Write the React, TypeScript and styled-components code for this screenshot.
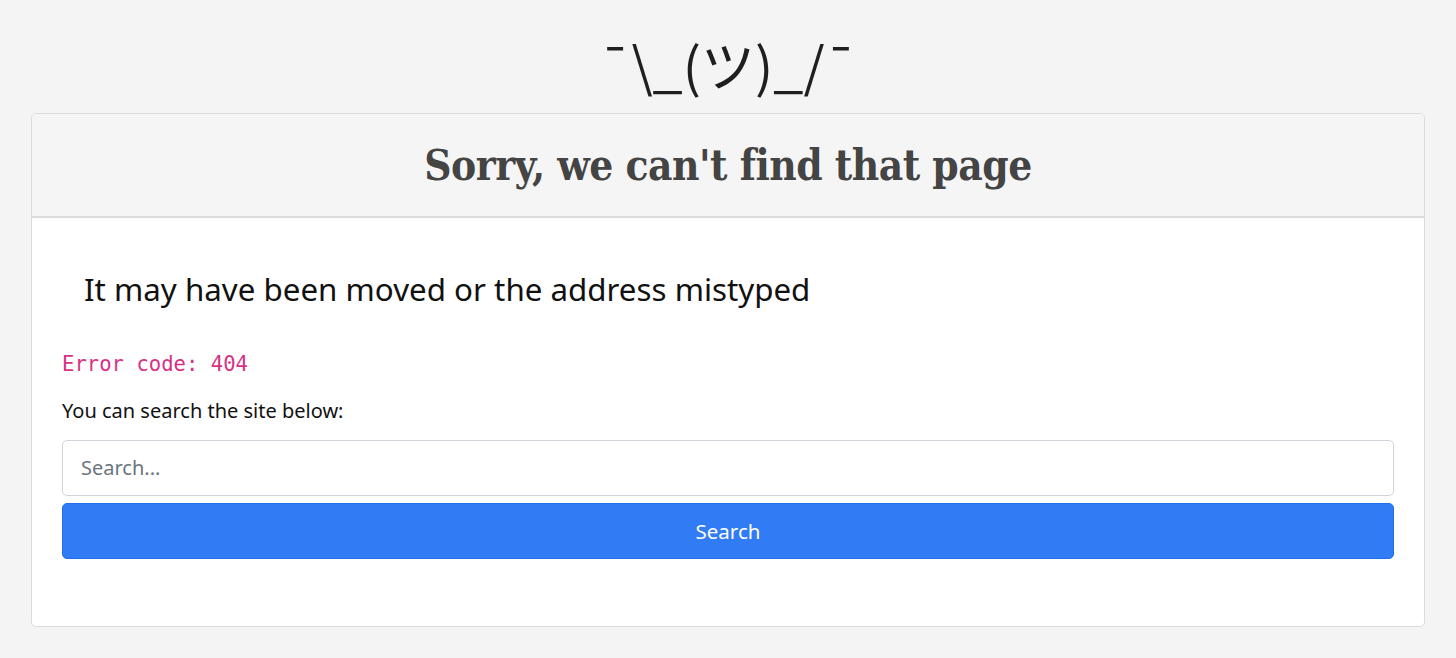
import styled, { createGlobalStyle } from 'styled-components';

const GlobalStyle = createGlobalStyle`
  html, body {
    margin: 0;
    padding: 0;
    background: #f4f4f4;
  }
  * {
    box-sizing: border-box;
  }
`;

const Page = styled.main`
  min-height: 100vh;
  padding: 0 31px 30px;
  font-family: "Noto Sans", "Open Sans", sans-serif;
  color: #212529;
`;

const Shrug = styled.div`
  height: 113px;
  display: flex;
  align-items: center;
  justify-content: center;
  font-family: "Noto Sans CJK JP", "DejaVu Sans", sans-serif;
  font-size: 54px;
  color: #1f1f1f;
  padding-top: 14px;
`;

const Card = styled.section`
  background: #fff;
  border: 1px solid #dcdcdc;
  border-radius: 5px;
  overflow: hidden;
`;

const CardHeader = styled.header`
  height: 104px;
  display: flex;
  align-items: center;
  justify-content: center;
  background: #f5f5f5;
  border-bottom: 2px solid #dcdcdc;
`;

const Title = styled.h1`
  margin: 0;
  font-family: "DejaVu Serif Condensed", "DejaVu Serif", serif;
  font-weight: 700;
  font-size: 42px;
  color: #444;
  letter-spacing: -0.5px;
`;

const CardBody = styled.div`
  padding: 53px 30px 67px;
`;

const Lead = styled.p`
  margin: 0 0 43px 22px;
  font-size: 31.3px;
  line-height: 1.2;
  color: #111;
`;

const Code = styled.code`
  display: block;
  font-family: "DejaVu Sans Mono", "Liberation Mono", monospace;
  font-size: 20.6px;
  color: #d63384;
  margin-bottom: 21px;
`;

const Hint = styled.p`
  margin: 0 0 16px;
  font-size: 20px;
  color: #111;
`;

const SearchForm = styled.form`
  display: flex;
  flex-direction: column;
  gap: 7px;
`;

const SearchInput = styled.input`
  height: 56px;
  padding: 0 18px;
  font-family: inherit;
  font-size: 20px;
  color: #212529;
  background: #fff;
  border: 1.5px solid #ced4da;
  border-radius: 5px;
  outline: none;
  &::placeholder {
    color: #6c757d;
  }
`;

const SearchButton = styled.button`
  height: 56px;
  font-family: inherit;
  font-size: 20.5px;
  color: #fff;
  background: #317cf5;
  border: 1.5px solid #1f6ff0;
  border-radius: 5px;
  cursor: pointer;
`;

export default function App() {
  return (
    <>
      <GlobalStyle />
      <Page>
        <Shrug>¯\_(ツ)_/¯</Shrug>
        <Card>
          <CardHeader>
            <Title>Sorry, we can't find that page</Title>
          </CardHeader>
          <CardBody>
            <Lead>It may have been moved or the address mistyped</Lead>
            <Code>Error code: 404</Code>
            <Hint>You can search the site below:</Hint>
            <SearchForm onSubmit={(e) => e.preventDefault()}>
              <SearchInput type="text" placeholder="Search..." />
              <SearchButton type="submit">Search</SearchButton>
            </SearchForm>
          </CardBody>
        </Card>
      </Page>
    </>
  );
}
